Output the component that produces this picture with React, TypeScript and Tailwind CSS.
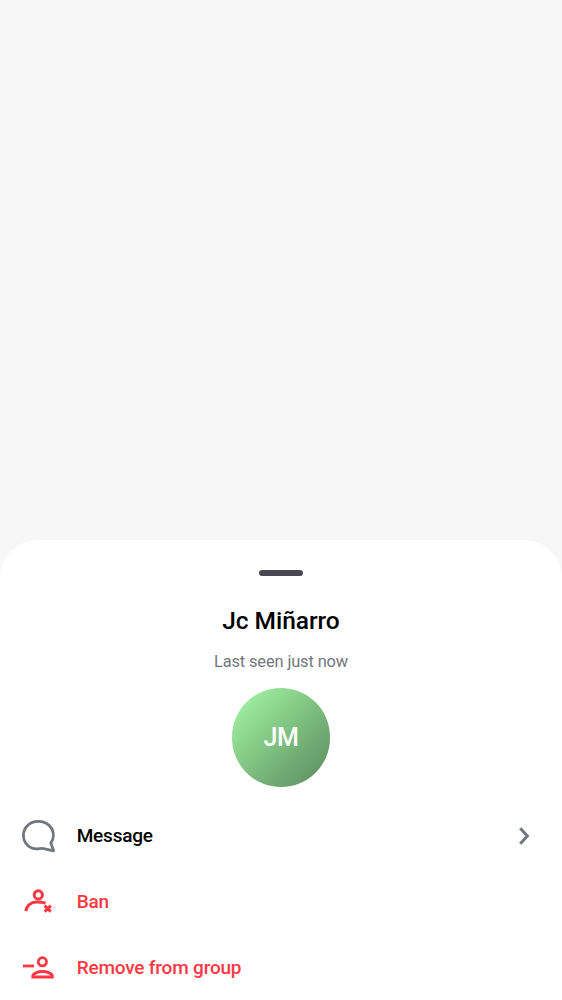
import type { ReactNode } from "react";

function MessageIcon() {
  return (
    <svg width="60" height="50" viewBox="0 1 60 50" fill="none" stroke="#72767e" strokeWidth="2.8" strokeLinejoin="round">
      <path d="M28.3 11.4C19.5 11.4 13.4 17.6 13.4 25.3C13.4 33.4 19.8 39.1 27.2 38.9C29.6 38.8 31.5 38 33.7 38.6L43.6 40.8L40.8 33C42.7 30.7 43.4 28.2 43.4 25.3C43.4 17.4 37 11.4 28.3 11.4Z" />
    </svg>
  );
}

function BanIcon() {
  return (
    <svg width="60" height="50" viewBox="0 0 60 50" fill="none" stroke="#ff3742" strokeWidth="3">
      <circle cx="28.3" cy="17.9" r="4.1" />
      <path d="M15.9 34.2C16.3 28.8 20.8 24.9 26.5 24.9C29.8 24.9 32.3 25 35.6 26.1" />
      <path d="M34.6 28.6L40.8 34.6M40.8 28.6L34.6 34.6" strokeWidth="3" />
    </svg>
  );
}

function RemoveIcon() {
  return (
    <svg width="60" height="50" viewBox="0 0 60 50" fill="none" stroke="#ff3742" strokeWidth="2.8">
      <path d="M13 23H24" />
      <circle cx="32.4" cy="18.8" r="4.1" />
      <path d="M22.8 34V32.7C22.8 30.7 27.8 28.5 32.6 28.5C37.4 28.5 42.3 30.7 42.3 32.7V34Z" />
    </svg>
  );
}

function ActionRow({ icon, label, color, chevron }: { icon: ReactNode; label: string; color: string; chevron?: boolean }) {
  return (
    <button className="flex h-[66px] w-full shrink-0 items-center pl-2.5 pr-3 text-left">
      {icon}
      <span className={`ml-[6.7px] flex-1 text-[19px] font-medium leading-6 tracking-[-0.2px] ${color}`}>{label}</span>
      {chevron && (
        <svg width="50" height="46" viewBox="0 0 50 46" fill="none" stroke="#72767e" strokeWidth="3">
          <path d="M20.2 15.2L27.4 23L20.2 30.8" />
        </svg>
      )}
    </button>
  );
}

export default function App() {
  return (
    <div className="flex h-[1000px] w-[562px] flex-col justify-end overflow-hidden bg-[#f7f7f7] font-[Roboto,sans-serif]">
      <section className="flex h-[460px] flex-col items-center rounded-t-[38px] bg-white pt-[30px]">
        <div className="h-1.5 w-11 shrink-0 rounded-full bg-[#4a4852]" />
        <h1 className="mt-[29px] text-[24.5px] font-medium leading-8 tracking-[-0.05px] text-black">Jc Miñarro</h1>
        <p className="mt-[13px] text-[16.4px] leading-6 tracking-[-0.12px] text-[#72767e]">Last seen just now</p>
        <div className="mt-3.5 flex size-[98.5px] shrink-0 items-center justify-center rounded-full bg-linear-135 from-[#9bea9c] from-15% to-[#629665] to-88% pt-px text-[25px] font-medium tracking-[-0.3px] text-white">
          JM
        </div>
        <div className="mt-[16.5px] flex w-full flex-col">
          <ActionRow icon={<MessageIcon />} label="Message" color="text-black" chevron />
          <ActionRow icon={<BanIcon />} label="Ban" color="text-[#ff3742]" />
          <ActionRow icon={<RemoveIcon />} label="Remove from group" color="text-[#ff3742]" />
        </div>
      </section>
    </div>
  );
}
